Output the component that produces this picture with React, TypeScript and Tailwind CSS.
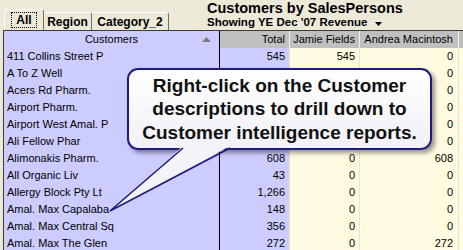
import React from "react"

// rows 2-6 sit under the callout, so their Total / Jamie cells stay empty
const rows = [
  { name: "411 Collins Street P", total: "545", jamie: "545", andrea: "0" },
  { name: "A To Z Well", total: "", jamie: "", andrea: "0" },
  { name: "Acers Rd Pharm.", total: "", jamie: "", andrea: "0" },
  { name: "Airport Pharm.", total: "", jamie: "", andrea: "0" },
  { name: "Airport West Amal. P", total: "", jamie: "", andrea: "0" },
  { name: "Ali Fellow Phar", total: "", jamie: "", andrea: "0" },
  { name: "Alimonakis Pharm.", total: "608", jamie: "0", andrea: "608" },
  { name: "All Organic Liv", total: "43", jamie: "0", andrea: "0" },
  { name: "Allergy Block Pty Lt", total: "1,266", jamie: "0", andrea: "0" },
  { name: "Amal. Max Capalaba", total: "148", jamie: "0", andrea: "0" },
  { name: "Amal. Max Central Sq", total: "356", jamie: "0", andrea: "0" },
  { name: "Amal. Max The Glen", total: "272", jamie: "0", andrea: "272" },
]

const font = { fontFamily: '"Liberation Sans", Arial, sans-serif' }

function Tabs() {
  return (
    <div className="flex items-end pl-[4px] pt-[9px] text-[12px] font-bold text-black">
      <div className="flex h-[21px] w-[40px] items-start justify-center rounded-t-[3px] border-l border-t border-r border-l-white border-t-white border-r-[#716f64] px-[2px] pt-[2px]">
        <span className="border border-dotted border-black px-[4px] leading-[14px]">All</span>
      </div>
      <div className="flex h-[18px] w-[48px] items-start justify-center rounded-t-[3px] border-t border-r border-t-white border-r-[#716f64] pt-[2px] leading-[14px]">
        Region
      </div>
      <div className="flex h-[18px] w-[77px] items-start justify-center rounded-t-[3px] border-t border-r border-t-white border-r-[#716f64] pt-[2px] leading-[14px]">
        Category_2
      </div>
    </div>
  )
}

function Title() {
  return (
    <div className="ml-[38px] flex flex-col font-bold text-black">
      <div className="text-[14.5px] leading-[16px]">Customers by SalesPersons</div>
      <div className="flex items-center text-[11.5px] leading-[13px]">
        Showing YE Dec '07 Revenue
        <svg width="7" height="4" viewBox="0 0 7 4" className="ml-[8px] mt-[3px]">
          <polygon points="0,0 7,0 3.5,4" fill="#000" />
        </svg>
      </div>
    </div>
  )
}

function Grid() {
  return (
    <div className="ml-[3px] border-t border-l border-[#3c3c3c] text-[11px] text-black">
      <div className="grid h-[17px] grid-cols-[216px_70px_70px_99px_1fr] border-b border-[#8a8a8a]">
        <div className="relative flex items-center justify-center border-r border-black bg-[#ccccff]">
          Customers
          <svg width="9" height="5" viewBox="0 0 9 5" className="absolute right-[8px] top-[6px]">
            <polygon points="4.5,0 9,5 0,5" fill="#7a7a7a" />
          </svg>
        </div>
        <div className="flex items-center justify-end border-r border-r-[#f2f2f2] bg-[#c0c0c0] pr-[4px]">Total</div>
        <div className="flex items-center justify-end border-r border-r-[#f2f2f2] bg-[#c0c0c0] pr-[4px]">Jamie Fields</div>
        <div className="flex items-center justify-end border-r border-r-[#f2f2f2] bg-[#c0c0c0] pr-[5px]">Andrea Macintosh</div>
        <div className="bg-[#c0c0c0]" />
      </div>
      {rows.map((r) => (
        <div key={r.name} className="grid h-[17px] grid-cols-[216px_70px_70px_99px_1fr]">
          <div className="flex items-center border-r border-b border-r-black border-b-[#dcdad0] bg-[#ccccff] pl-[3px]">
            {r.name}
          </div>
          <div className="flex items-center justify-end border-r border-b border-[#e4e0c4] border-b-[#dcdad0] bg-[#ccccff] pr-[4px]">
            {r.total}
          </div>
          <div className="flex items-center justify-end border-r border-b border-[#e9e5c9] bg-[#fffbe0] pr-[4px]">
            {r.jamie}
          </div>
          <div className="flex items-center justify-end border-r border-b border-[#e9e5c9] bg-[#fffbe0] pr-[5px]">
            {r.andrea}
          </div>
          <div className="border-b border-[#e9e5c9] bg-[#fffbe0]" />
        </div>
      ))}
    </div>
  )
}

function Callout() {
  return (
    <>
      <div className="absolute left-[127px] top-[68px] flex h-[82px] w-[305px] items-center justify-center rounded-[11px] border-2 border-[#1d1d7e] bg-gradient-to-b from-white to-[#f1f1f7] shadow-[3px_3px_4px_rgba(0,0,0,0.4)]">
        <p className="text-center text-[19px] font-bold leading-[23.5px] text-[#111]">
          Right-click on the Customer
          <br />
          descriptions to drill down to
          <br />
          Customer intelligence reports.
        </p>
      </div>
      <svg className="pointer-events-none absolute left-0 top-0" width="463" height="250">
        <polygon points="183,146 230,146 110,211" fill="#f3f3f8" />
        <polyline points="183,148 110,211 230,148" fill="none" stroke="#1d1d7e" strokeWidth="1.6" strokeLinejoin="miter" />
      </svg>
    </>
  )
}

export default function App() {
  return (
    <div className="relative h-[250px] w-[463px] overflow-hidden bg-[#ece9d8]" style={font}>
      <div className="flex h-[30px] items-start">
        <Tabs />
        <Title />
      </div>
      <Grid />
      <Callout />
    </div>
  )
}
